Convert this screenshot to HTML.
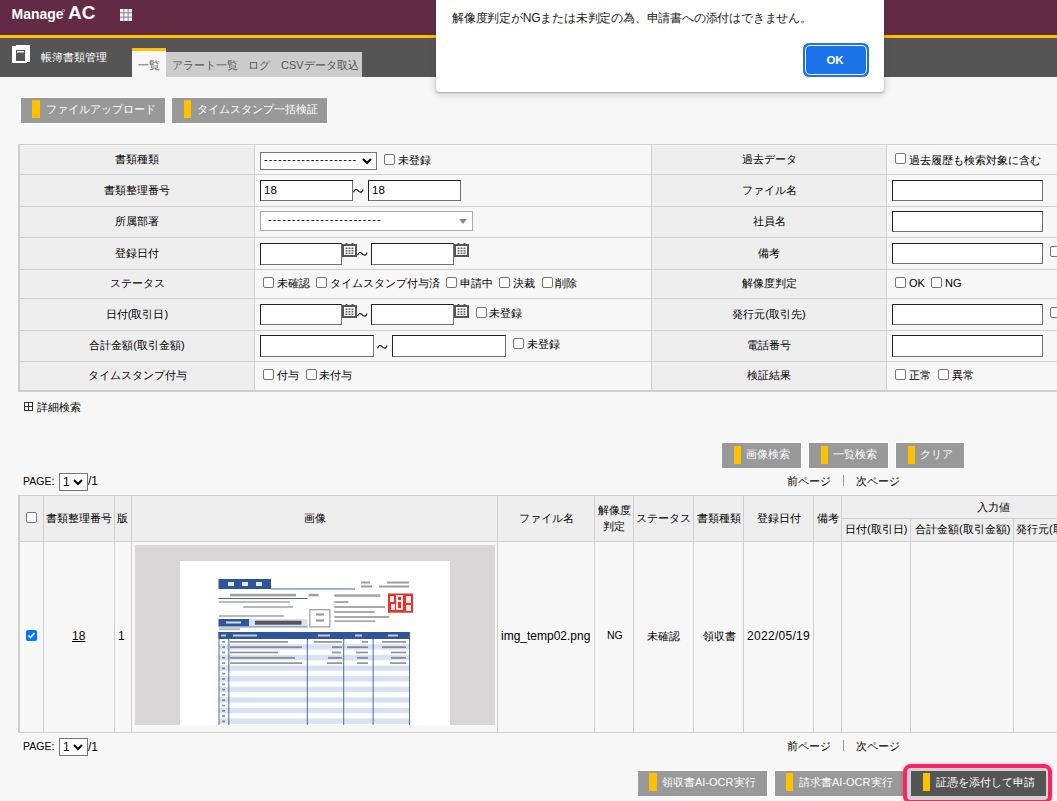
<!DOCTYPE html>
<html><head><meta charset="utf-8">
<style>
*{box-sizing:border-box;margin:0;padding:0}
html,body{width:1057px;height:801px;overflow:hidden}
body{position:relative;background:#f7f7f7;font-family:"Liberation Sans",sans-serif;font-size:11px;color:#000}
.a{position:absolute}
.t{position:absolute;white-space:nowrap;line-height:14px}
.hl{position:absolute;height:1px;background:#cfcfcf}
.vl{position:absolute;width:1px;background:#cfcfcf}
.inp{position:absolute;background:#fff;border:1px solid;border-color:#222 #707070 #707070 #222}
.cb{position:absolute;width:11px;height:11px;border:1px solid #767676;border-radius:2px;background:#fff}
.btn{position:absolute;height:25px;background:#999;box-shadow:0 0 0 1px rgba(255,255,255,.85);color:#fff}
.btn .bar{position:absolute;left:11px;top:2px;width:8px;height:18px;background:#ffc000}
.btn .t{top:4px;left:25px;color:#fff}
.cal{width:15px;height:14px;background:#555;border-top:1px solid transparent}
.lbl{position:absolute;text-align:center;white-space:nowrap;line-height:14px}
</style></head><body>

<!-- header -->
<div class="a" style="left:0;top:0;width:1057px;height:35px;background:#622a43"></div>
<div class="t" style="left:11.5px;top:4px;color:#fff;font-weight:bold;font-size:14px;line-height:20px">Manage</div>
<svg class="a" style="left:62px;top:9px" width="3" height="3"><circle cx="1.5" cy="1.5" r="1.2" fill="none" stroke="#fff" stroke-width="0.6" opacity="0.8"/></svg>
<div class="t" style="left:68px;top:1px;color:#fff;font-weight:bold;font-size:19px;line-height:24px">AC</div>
<svg class="a" style="left:120px;top:9px" width="12" height="12"><g fill="#fff"><rect x="0" y="0" width="3.4" height="3.4"/><rect x="4.3" y="0" width="3.4" height="3.4"/><rect x="8.6" y="0" width="3.4" height="3.4"/><rect x="0" y="4.3" width="3.4" height="3.4"/><rect x="4.3" y="4.3" width="3.4" height="3.4"/><rect x="8.6" y="4.3" width="3.4" height="3.4"/><rect x="0" y="8.6" width="3.4" height="3.4"/><rect x="4.3" y="8.6" width="3.4" height="3.4"/><rect x="8.6" y="8.6" width="3.4" height="3.4"/></g><g fill="#fff" opacity="0.45"><rect x="3.4" y="0" width="0.9" height="12"/><rect x="7.7" y="0" width="0.9" height="12"/><rect x="0" y="3.4" width="12" height="0.9"/><rect x="0" y="7.7" width="12" height="0.9"/></g></svg>
<div class="a" style="left:0;top:35px;width:1057px;height:3px;background:#ffc000"></div>
<div class="a" style="left:0;top:38px;width:1057px;height:39px;background:#555"></div>

<!-- page icon -->
<svg class="a" style="left:12px;top:45px" width="19" height="19">
<path d="M1 1H4V0H18V17H15V18H0V1Z" fill="#fff"/>
<rect x="4" y="5" width="9" height="11" fill="#555"/>
<rect x="5" y="6" width="7" height="1.5" fill="#fff"/>
</svg>
<div class="t" style="left:41px;top:50px;color:#fff">帳簿書類管理</div>

<!-- tabs -->
<div class="a" style="left:132px;top:48px;width:34px;height:29px;background:#f7f7f7;border-top:3px solid #ffc000"></div>
<div class="t" style="left:138px;top:58px;color:#555">一覧</div>
<div class="a" style="left:166px;top:52px;width:196px;height:25px;background:#ccc"></div>
<div class="t" style="left:172px;top:58px;color:#555">アラート一覧</div>
<div class="t" style="left:248px;top:58px;color:#555">ログ</div>
<div class="t" style="left:281px;top:58px;color:#555">CSVデータ取込</div>

<!-- top buttons -->
<div class="btn" style="left:21px;top:98px;width:144px"><div class="bar"></div><div class="t">ファイルアップロード</div></div>
<div class="btn" style="left:172px;top:98px;width:155px"><div class="bar" style="left:12px;width:7px"></div><div class="t">タイムスタンプ一括検証</div></div>

<!-- SEARCH TABLE -->
<div class="a" style="left:20px;top:145px;width:234px;height:245px;background:#eee"></div>
<div class="a" style="left:652px;top:145px;width:234px;height:245px;background:#eee"></div>
<div class="a" style="left:18px;top:144px;width:2px;height:248px;background:#cfcfcf"></div>
<div class="hl" style="left:18px;top:144px;width:1039px"></div>
<div class="a" style="left:20px;top:145px;width:1037px;height:1px;background:#fbfbfb"></div>
<div class="hl" style="left:18px;top:174px;width:1039px"></div>
<div class="hl" style="left:18px;top:206px;width:1039px"></div>
<div class="hl" style="left:18px;top:237px;width:1039px"></div>
<div class="hl" style="left:18px;top:269px;width:1039px"></div>
<div class="hl" style="left:18px;top:298px;width:1039px"></div>
<div class="hl" style="left:18px;top:330px;width:1039px"></div>
<div class="hl" style="left:18px;top:361px;width:1039px"></div>
<div class="a" style="left:18px;top:390px;width:1039px;height:2px;background:#cfcfcf"></div>
<div class="vl" style="left:254px;top:144px;height:247px"></div>
<div class="vl" style="left:651px;top:144px;height:247px"></div>
<div class="vl" style="left:886px;top:144px;height:247px"></div>

<!-- left labels -->
<div class="lbl" style="left:20px;width:234px;top:152px">書類種類</div>
<div class="lbl" style="left:20px;width:234px;top:183px">書類整理番号</div>
<div class="lbl" style="left:20px;width:234px;top:214px">所属部署</div>
<div class="lbl" style="left:20px;width:234px;top:246px">登録日付</div>
<div class="lbl" style="left:20px;width:234px;top:276px">ステータス</div>
<div class="lbl" style="left:20px;width:234px;top:307px">日付(取引日)</div>
<div class="lbl" style="left:20px;width:234px;top:338px">合計金額(取引金額)</div>
<div class="lbl" style="left:20px;width:234px;top:368px">タイムスタンプ付与</div>
<!-- right labels -->
<div class="lbl" style="left:652px;width:234px;top:152px">過去データ</div>
<div class="lbl" style="left:652px;width:234px;top:183px">ファイル名</div>
<div class="lbl" style="left:652px;width:234px;top:214px">社員名</div>
<div class="lbl" style="left:652px;width:234px;top:246px">備考</div>
<div class="lbl" style="left:652px;width:234px;top:276px">解像度判定</div>
<div class="lbl" style="left:652px;width:234px;top:307px">発行元(取引先)</div>
<div class="lbl" style="left:652px;width:234px;top:338px">電話番号</div>
<div class="lbl" style="left:652px;width:234px;top:368px">検証結果</div>

<!-- row1 -->
<div class="a" style="left:260px;top:152px;width:117px;height:18px;background:#fff;border:1px solid #767676"></div>
<div class="t" style="left:264px;top:152px;color:#000;letter-spacing:1px">--------------------</div>
<svg class="a" style="left:362px;top:158px" width="10" height="7"><path d="M1 1L5 5L9 1" stroke="#000" stroke-width="2" fill="none"/></svg>
<div class="cb" style="left:384px;top:154px"></div>
<div class="t" style="left:398px;top:153px">未登録</div>
<!-- row2 -->
<div class="inp" style="left:260px;top:180px;width:93px;height:21px"></div>
<div class="t" style="left:264px;top:183px;font-size:11.5px;color:#000">18</div>
<svg class="a" style="left:353px;top:188.5px" width="11" height="4"><path d="M0.6 3.2Q1.6 0.5 3 0.5Q4.4 0.5 5.8 2.4Q7.2 3.5 8.6 2.9Q9.4 2.4 10 0.5" stroke="#000" stroke-width="1.1" fill="none"/></svg>
<div class="inp" style="left:368px;top:180px;width:93px;height:21px"></div>
<div class="t" style="left:372px;top:183px;font-size:11.5px;color:#000">18</div>
<!-- row3 -->
<div class="a" style="left:260px;top:211px;width:213px;height:20px;background:#fff;border:1px solid #aaa"></div>
<div class="t" style="left:268px;top:212px;color:#000;letter-spacing:1.08px">------------------------</div>
<svg class="a" style="left:459px;top:219px" width="8" height="5"><path d="M0 0H8L4 5Z" fill="#888"/></svg>
<!-- row4 -->
<div class="inp" style="left:260px;top:243px;width:82px;height:22px"></div>
<svg class="a" style="left:342px;top:243px" width="15" height="15"><rect x="0" y="1" width="15" height="13" fill="#555"/><rect x="3.5" y="0" width="2" height="2" fill="#555"/><rect x="9.5" y="0" width="2" height="2" fill="#555"/><rect x="2" y="3" width="11" height="9" fill="#fff"/><g fill="#666"><rect x="3.5" y="4.5" width="2" height="1.5"/><rect x="6.5" y="4.5" width="2" height="1.5"/><rect x="9.5" y="4.5" width="2" height="1.5"/><rect x="3.5" y="7" width="2" height="1.5"/><rect x="6.5" y="7" width="2" height="1.5"/><rect x="9.5" y="7" width="2" height="1.5"/><rect x="3.5" y="9.5" width="2" height="1.5"/><rect x="6.5" y="9.5" width="2" height="1.5"/><rect x="9.5" y="9.5" width="2" height="1.5"/></g></svg>
<svg class="a" style="left:357px;top:251.5px" width="11" height="4"><path d="M0.6 3.2Q1.6 0.5 3 0.5Q4.4 0.5 5.8 2.4Q7.2 3.5 8.6 2.9Q9.4 2.4 10 0.5" stroke="#000" stroke-width="1.1" fill="none"/></svg>
<div class="inp" style="left:371px;top:243px;width:83px;height:22px"></div>
<svg class="a" style="left:454px;top:243px" width="15" height="15"><rect x="0" y="1" width="15" height="13" fill="#555"/><rect x="3.5" y="0" width="2" height="2" fill="#555"/><rect x="9.5" y="0" width="2" height="2" fill="#555"/><rect x="2" y="3" width="11" height="9" fill="#fff"/><g fill="#666"><rect x="3.5" y="4.5" width="2" height="1.5"/><rect x="6.5" y="4.5" width="2" height="1.5"/><rect x="9.5" y="4.5" width="2" height="1.5"/><rect x="3.5" y="7" width="2" height="1.5"/><rect x="6.5" y="7" width="2" height="1.5"/><rect x="9.5" y="7" width="2" height="1.5"/><rect x="3.5" y="9.5" width="2" height="1.5"/><rect x="6.5" y="9.5" width="2" height="1.5"/><rect x="9.5" y="9.5" width="2" height="1.5"/></g></svg>
<!-- row5 -->
<div class="cb" style="left:263px;top:277px"></div><div class="t" style="left:277px;top:276px">未確認</div>
<div class="cb" style="left:316px;top:277px"></div><div class="t" style="left:330px;top:276px">タイムスタンプ付与済</div>
<div class="cb" style="left:446px;top:277px"></div><div class="t" style="left:460px;top:276px">申請中</div>
<div class="cb" style="left:499px;top:277px"></div><div class="t" style="left:513px;top:276px">決裁</div>
<div class="cb" style="left:542px;top:277px"></div><div class="t" style="left:555px;top:276px">削除</div>
<!-- row6 -->
<div class="inp" style="left:260px;top:304px;width:82px;height:21px"></div>
<svg class="a" style="left:342px;top:304px" width="15" height="15"><rect x="0" y="1" width="15" height="13" fill="#555"/><rect x="3.5" y="0" width="2" height="2" fill="#555"/><rect x="9.5" y="0" width="2" height="2" fill="#555"/><rect x="2" y="3" width="11" height="9" fill="#fff"/><g fill="#666"><rect x="3.5" y="4.5" width="2" height="1.5"/><rect x="6.5" y="4.5" width="2" height="1.5"/><rect x="9.5" y="4.5" width="2" height="1.5"/><rect x="3.5" y="7" width="2" height="1.5"/><rect x="6.5" y="7" width="2" height="1.5"/><rect x="9.5" y="7" width="2" height="1.5"/><rect x="3.5" y="9.5" width="2" height="1.5"/><rect x="6.5" y="9.5" width="2" height="1.5"/><rect x="9.5" y="9.5" width="2" height="1.5"/></g></svg>
<svg class="a" style="left:357px;top:312.5px" width="11" height="4"><path d="M0.6 3.2Q1.6 0.5 3 0.5Q4.4 0.5 5.8 2.4Q7.2 3.5 8.6 2.9Q9.4 2.4 10 0.5" stroke="#000" stroke-width="1.1" fill="none"/></svg>
<div class="inp" style="left:371px;top:304px;width:83px;height:21px"></div>
<svg class="a" style="left:454px;top:304px" width="15" height="15"><rect x="0" y="1" width="15" height="13" fill="#555"/><rect x="3.5" y="0" width="2" height="2" fill="#555"/><rect x="9.5" y="0" width="2" height="2" fill="#555"/><rect x="2" y="3" width="11" height="9" fill="#fff"/><g fill="#666"><rect x="3.5" y="4.5" width="2" height="1.5"/><rect x="6.5" y="4.5" width="2" height="1.5"/><rect x="9.5" y="4.5" width="2" height="1.5"/><rect x="3.5" y="7" width="2" height="1.5"/><rect x="6.5" y="7" width="2" height="1.5"/><rect x="9.5" y="7" width="2" height="1.5"/><rect x="3.5" y="9.5" width="2" height="1.5"/><rect x="6.5" y="9.5" width="2" height="1.5"/><rect x="9.5" y="9.5" width="2" height="1.5"/></g></svg>
<div class="cb" style="left:476px;top:307px"></div><div class="t" style="left:489px;top:306px">未登録</div>
<!-- row7 -->
<div class="inp" style="left:260px;top:335px;width:114px;height:22px"></div>
<svg class="a" style="left:377px;top:344.5px" width="11" height="4"><path d="M0.6 3.2Q1.6 0.5 3 0.5Q4.4 0.5 5.8 2.4Q7.2 3.5 8.6 2.9Q9.4 2.4 10 0.5" stroke="#000" stroke-width="1.1" fill="none"/></svg>
<div class="inp" style="left:392px;top:335px;width:114px;height:22px"></div>
<div class="cb" style="left:513px;top:338px"></div><div class="t" style="left:527px;top:337px">未登録</div>
<!-- row8 -->
<div class="cb" style="left:263px;top:369px"></div><div class="t" style="left:277px;top:368px">付与</div>
<div class="cb" style="left:306px;top:369px"></div><div class="t" style="left:319px;top:368px">未付与</div>

<!-- right values -->
<div class="cb" style="left:895px;top:153px"></div><div class="t" style="left:909px;top:153px">過去履歴も検索対象に含む</div>
<div class="inp" style="left:892px;top:180px;width:151px;height:21px"></div>
<div class="inp" style="left:892px;top:211px;width:151px;height:21px"></div>
<div class="inp" style="left:892px;top:243px;width:151px;height:21px"></div>
<div class="cb" style="left:1050px;top:246px"></div>
<div class="cb" style="left:895px;top:277px"></div><div class="t" style="left:909px;top:276px">OK</div>
<div class="cb" style="left:931px;top:277px"></div><div class="t" style="left:945px;top:276px">NG</div>
<div class="inp" style="left:892px;top:304px;width:151px;height:21px"></div>
<div class="cb" style="left:1050px;top:307px"></div>
<div class="inp" style="left:892px;top:335px;width:151px;height:22px"></div>
<div class="cb" style="left:895px;top:369px"></div><div class="t" style="left:909px;top:368px">正常</div>
<div class="cb" style="left:938px;top:369px"></div><div class="t" style="left:952px;top:368px">異常</div>

<!-- detail search -->
<svg class="a" style="left:24px;top:402px" width="9" height="9"><rect x="0.5" y="0.5" width="8" height="8" fill="none" stroke="#333"/><path d="M4.5 1V8M1 4.5H8" stroke="#333"/></svg>
<div class="t" style="left:37px;top:400px">詳細検索</div>

<!-- search buttons -->
<div class="btn" style="left:722px;top:443px;width:79px"><div class="bar" style="left:12px;top:3px;width:7px"></div><div class="t" style="left:24px">画像検索</div></div>
<div class="btn" style="left:809px;top:443px;width:79px"><div class="bar" style="left:12px;top:3px;width:7px"></div><div class="t" style="left:24px">一覧検索</div></div>
<div class="btn" style="left:896px;top:443px;width:68px"><div class="bar" style="left:12px;top:3px;width:7px"></div><div class="t" style="left:24px">クリア</div></div>
<div class="t" style="left:787px;top:474px">前ページ</div>
<div class="a" style="left:843px;top:475px;width:1px;height:11px;background:#999"></div>
<div class="t" style="left:856px;top:474px">次ページ</div>
<div class="t" style="left:23px;top:474px;font-size:10.5px">PAGE:</div>
<div class="a" style="left:59px;top:473px;width:29px;height:18px;background:#fff;border:1px solid #767676"></div>
<div class="t" style="left:63px;top:475px;font-size:12px;color:#000">1</div>
<svg class="a" style="left:73px;top:479px" width="10" height="7"><path d="M1 1L5 5L9 1" stroke="#000" stroke-width="2" fill="none"/></svg>
<div class="t" style="left:88px;top:474px;font-size:12px;color:#000">/1</div>

<!-- RESULTS TABLE -->
<div class="a" style="left:20px;top:496px;width:1037px;height:45px;background:#eee"></div>
<div class="a" style="left:18px;top:495px;width:2px;height:238px;background:#cfcfcf"></div>
<div class="hl" style="left:18px;top:495px;width:1039px"></div>
<div class="hl" style="left:841px;top:518px;width:216px"></div>
<div class="hl" style="left:18px;top:541px;width:1039px"></div>
<div class="hl" style="left:18px;top:732px;width:1039px"></div>
<div class="vl" style="left:43px;top:495px;height:237px"></div>
<div class="vl" style="left:114px;top:495px;height:237px"></div>
<div class="vl" style="left:131px;top:495px;height:237px"></div>
<div class="vl" style="left:497px;top:495px;height:237px"></div>
<div class="vl" style="left:594px;top:495px;height:237px"></div>
<div class="vl" style="left:633px;top:495px;height:237px"></div>
<div class="vl" style="left:693px;top:495px;height:237px"></div>
<div class="vl" style="left:743px;top:495px;height:237px"></div>
<div class="vl" style="left:813px;top:495px;height:237px"></div>
<div class="vl" style="left:841px;top:495px;height:237px"></div>
<div class="vl" style="left:910px;top:518px;height:214px"></div>
<div class="vl" style="left:1013px;top:518px;height:214px"></div>
<div class="cb" style="left:26px;top:512px"></div>
<div class="t" style="left:46px;top:511px">書類整理番号</div>
<div class="t" style="left:117px;top:511px">版</div>
<div class="lbl" style="left:132px;width:365px;top:511px">画像</div>
<div class="lbl" style="left:498px;width:96px;top:511px">ファイル名</div>
<div class="lbl" style="left:595px;width:38px;top:502px;line-height:16px">解像度<br>判定</div>
<div class="lbl" style="left:634px;width:59px;top:511px">ステータス</div>
<div class="lbl" style="left:694px;width:49px;top:511px">書類種類</div>
<div class="lbl" style="left:744px;width:69px;top:511px">登録日付</div>
<div class="lbl" style="left:814px;width:27px;top:511px">備考</div>
<div class="t" style="left:977px;top:500px">入力値</div>
<div class="t" style="left:845px;top:522px">日付(取引日)</div>
<div class="t" style="left:915px;top:522px">合計金額(取引金額)</div>
<div class="t" style="left:1016px;top:522px">発行元(取引先)</div>

<!-- data row -->
<div class="a" style="left:26px;top:630px;width:11px;height:11px;background:#0075ff;border-radius:2px"></div>
<svg class="a" style="left:26px;top:630px" width="11" height="11"><path d="M2.5 5.5L4.5 7.5L8.5 3" stroke="#fff" stroke-width="1.6" fill="none"/></svg>
<div class="t" style="left:72px;top:629px;font-size:12px;text-decoration:underline">18</div>
<div class="t" style="left:118px;top:629px;font-size:12px">1</div>
<div class="a" style="left:135px;top:545px;width:360px;height:180px;background:#d9d6d7"></div>
<div class="a" style="left:180px;top:561px;width:270px;height:164px;background:#fff"></div>
<svg class="a" style="left:180px;top:561px" width="270" height="164"><defs><filter id="bl" x="-5%" y="-5%" width="110%" height="110%"><feGaussianBlur stdDeviation="0.35"/></filter></defs><g transform="translate(-180,-561)" filter="url(#bl)"><rect x="218.5" y="579" width="52.5" height="10" fill="#2f5597"/><g fill="#fff" opacity="0.85"><rect x="228" y="582" width="6" height="4"/><rect x="242" y="582" width="6" height="4"/><rect x="256" y="582" width="6" height="4"/></g><rect x="271" y="588.5" width="84" height="0.9" fill="#2f5597"/><g fill="#777" opacity="0.7"><rect x="361" y="581.5" width="9" height="2"/><rect x="387" y="581.5" width="22" height="2"/><rect x="361" y="585.5" width="11" height="2"/><rect x="379" y="585.5" width="30" height="2"/></g><g fill="#555" opacity="0.55"><rect x="230" y="593.8" width="66" height="2.6"/><rect x="308.5" y="593.8" width="10" height="2.6"/></g><rect x="218.5" y="598" width="89" height="0.9" fill="#2f5597"/><g fill="#666" opacity="0.45"><rect x="219" y="601" width="71" height="2"/><rect x="243" y="606" width="50" height="2"/><rect x="219" y="615" width="65" height="2"/><rect x="219" y="628.3" width="21" height="1.8"/></g><rect x="218.5" y="619" width="30.5" height="7" fill="#2f5597"/><rect x="226" y="621.5" width="15" height="2" fill="#fff" opacity="0.8"/><rect x="249" y="619" width="58.5" height="7" fill="#d9e2f3"/><rect x="255" y="620.7" width="46.5" height="4" fill="#333" opacity="0.8"/><rect x="218.5" y="626.5" width="89" height="0.8" fill="#2f5597"/><rect x="309.9" y="609.7" width="20" height="17.2" fill="#fff" stroke="#888" stroke-width="1"/><g fill="#666" opacity="0.7"><rect x="316" y="613.5" width="8" height="2"/><rect x="316" y="619.5" width="8" height="2"/></g><g fill="#555" opacity="0.5"><rect x="334.3" y="594.3" width="46" height="2.6"/><rect x="334.3" y="601" width="14" height="2"/><rect x="334.3" y="606" width="51" height="2"/><rect x="334.3" y="611" width="40" height="2"/><rect x="334.3" y="616" width="55" height="2"/><rect x="334.3" y="620.3" width="41" height="1.8"/></g><rect x="388" y="593.5" width="25" height="19.2" fill="#e8302c"/><g fill="#fff" opacity="0.9"><rect x="390" y="596" width="4" height="6"/><rect x="396" y="595" width="7" height="15"/><rect x="406" y="596" width="5" height="7"/><rect x="391" y="604" width="4" height="6"/><rect x="406" y="605" width="5" height="6"/></g><g fill="#e8302c"><rect x="398" y="597" width="3" height="3"/><rect x="398" y="602" width="3" height="6"/></g><rect x="218.5" y="632" width="191" height="93" fill="#fff"/><rect x="219" y="644.3" width="190" height="5.3" fill="#d9e2f3"/><rect x="219" y="654.9" width="190" height="5.3" fill="#d9e2f3"/><rect x="219" y="665.5" width="190" height="5.3" fill="#d9e2f3"/><rect x="219" y="676.1" width="190" height="5.3" fill="#d9e2f3"/><rect x="219" y="686.7" width="190" height="5.3" fill="#d9e2f3"/><rect x="219" y="697.3" width="190" height="5.3" fill="#d9e2f3"/><rect x="219" y="707.9" width="190" height="5.3" fill="#d9e2f3"/><rect x="219" y="718.5" width="190" height="5.3" fill="#d9e2f3"/><rect x="218.5" y="632" width="191" height="7" fill="#2f5597"/><g fill="#fff" opacity="0.7"><rect x="221" y="634.5" width="5" height="2"/><rect x="233" y="634.5" width="24" height="2"/><rect x="318" y="634.5" width="12" height="2"/><rect x="355" y="634.5" width="7" height="2"/><rect x="388" y="634.5" width="10" height="2"/></g><rect x="218.5" y="632" width="1" height="93" fill="#2f5597" opacity="0.85"/><rect x="228.3" y="632" width="1" height="93" fill="#2f5597" opacity="0.85"/><rect x="306.8" y="632" width="1" height="93" fill="#2f5597" opacity="0.85"/><rect x="343.2" y="632" width="1" height="93" fill="#2f5597" opacity="0.85"/><rect x="372.6" y="632" width="1" height="93" fill="#2f5597" opacity="0.85"/><rect x="409.0" y="632" width="1" height="93" fill="#2f5597" opacity="0.85"/><g fill="#333" opacity="0.5"><rect x="230" y="641.0" width="58" height="1.8"/><rect x="314" y="641.0" width="28" height="1.8"/><rect x="362" y="641.0" width="6" height="1.8"/><rect x="382" y="641.0" width="24" height="1.8"/><rect x="230" y="646.3" width="72" height="1.8"/><rect x="332" y="646.3" width="10" height="1.8"/><rect x="347" y="646.3" width="21" height="1.8"/><rect x="382" y="646.3" width="24" height="1.8"/><rect x="230" y="651.6" width="48" height="1.8"/><rect x="332" y="651.6" width="9" height="1.8"/><rect x="356" y="651.6" width="12" height="1.8"/><rect x="391" y="651.6" width="15" height="1.8"/><rect x="230" y="656.9" width="65" height="1.8"/><rect x="328" y="656.9" width="14" height="1.8"/><rect x="357" y="656.9" width="11" height="1.8"/><rect x="391" y="656.9" width="15" height="1.8"/><rect x="230" y="662.2" width="72" height="1.8"/><rect x="327" y="662.2" width="15" height="1.8"/><rect x="357" y="662.2" width="11" height="1.8"/><rect x="390" y="662.2" width="16" height="1.8"/><rect x="222" y="641.0" width="3" height="1.8"/><rect x="222" y="646.3" width="3" height="1.8"/><rect x="222" y="651.6" width="3" height="1.8"/><rect x="222" y="656.9" width="3" height="1.8"/><rect x="222" y="662.2" width="3" height="1.8"/><rect x="222" y="667.5" width="3" height="1.8"/><rect x="222" y="672.8" width="3" height="1.8"/><rect x="222" y="678.1" width="3" height="1.8"/><rect x="222" y="683.4" width="3" height="1.8"/><rect x="222" y="688.7" width="3" height="1.8"/><rect x="222" y="694.0" width="3" height="1.8"/><rect x="222" y="699.3" width="3" height="1.8"/><rect x="222" y="704.6" width="3" height="1.8"/><rect x="222" y="709.9" width="3" height="1.8"/><rect x="222" y="715.2" width="3" height="1.8"/><rect x="222" y="720.5" width="3" height="1.8"/></g></g></svg>
<div class="t" style="left:501px;top:629px;font-size:12px">img_temp02.png</div>
<div class="t" style="left:607px;top:628px;font-size:10.5px">NG</div>
<div class="t" style="left:647px;top:629px">未確認</div>
<div class="t" style="left:703px;top:629px">領収書</div>
<div class="t" style="left:747px;top:629px;font-size:12px;letter-spacing:0.3px">2022/05/19</div>

<!-- bottom -->
<div class="t" style="left:23px;top:739px;font-size:10.5px">PAGE:</div>
<div class="a" style="left:59px;top:738px;width:29px;height:18px;background:#fff;border:1px solid #767676"></div>
<div class="t" style="left:63px;top:740px;font-size:12px;color:#000">1</div>
<svg class="a" style="left:73px;top:744px" width="10" height="7"><path d="M1 1L5 5L9 1" stroke="#000" stroke-width="2" fill="none"/></svg>
<div class="t" style="left:88px;top:740px;font-size:12px;color:#000">/1</div>
<div class="t" style="left:787px;top:739px">前ページ</div>
<div class="a" style="left:843px;top:740px;width:1px;height:11px;background:#999"></div>
<div class="t" style="left:856px;top:739px">次ページ</div>

<div class="btn" style="left:638px;top:771px;width:129px"><div class="bar"></div><div class="t" style="left:24px">領収書AI-OCR実行</div></div>
<div class="btn" style="left:775px;top:771px;width:130px"><div class="bar" style="width:7px"></div><div class="t" style="left:24px">請求書AI-OCR実行</div></div>
<div class="a" style="left:903px;top:764px;width:149px;height:40px;border:4px solid #ff2266;border-radius:8px;background:#d0d2d2;box-shadow:0 0 4px rgba(0,0,0,.18)"></div>
<div class="btn" style="left:911px;top:771px;width:135px;background:#555;box-shadow:none"><div class="bar" style="left:12px;width:7px"></div><div class="t" style="left:25px">証憑を添付して申請</div></div>

<!-- dialog -->
<div class="a" style="left:436px;top:-10px;width:448px;height:102px;background:#fff;border-radius:4px;box-shadow:0 1px 2px rgba(60,64,67,.35),0 2px 6px 2px rgba(60,64,67,.15)"></div>
<div class="t" style="left:452px;top:11px;font-size:12px;color:#222;letter-spacing:-0.2px">解像度判定がNGまたは未判定の為、申請書への添付はできません。</div>
<div class="a" style="left:803px;top:43px;width:66px;height:34px;border-radius:6px;background:#1a73e8"></div>
<div class="a" style="left:805px;top:45px;width:62px;height:30px;border-radius:5px;border:1px solid #fff;background:#1a73e8"></div>
<div class="t" style="left:802px;top:53px;width:66px;text-align:center;color:#fff;font-weight:bold;font-size:11.5px">OK</div>

</body></html>
